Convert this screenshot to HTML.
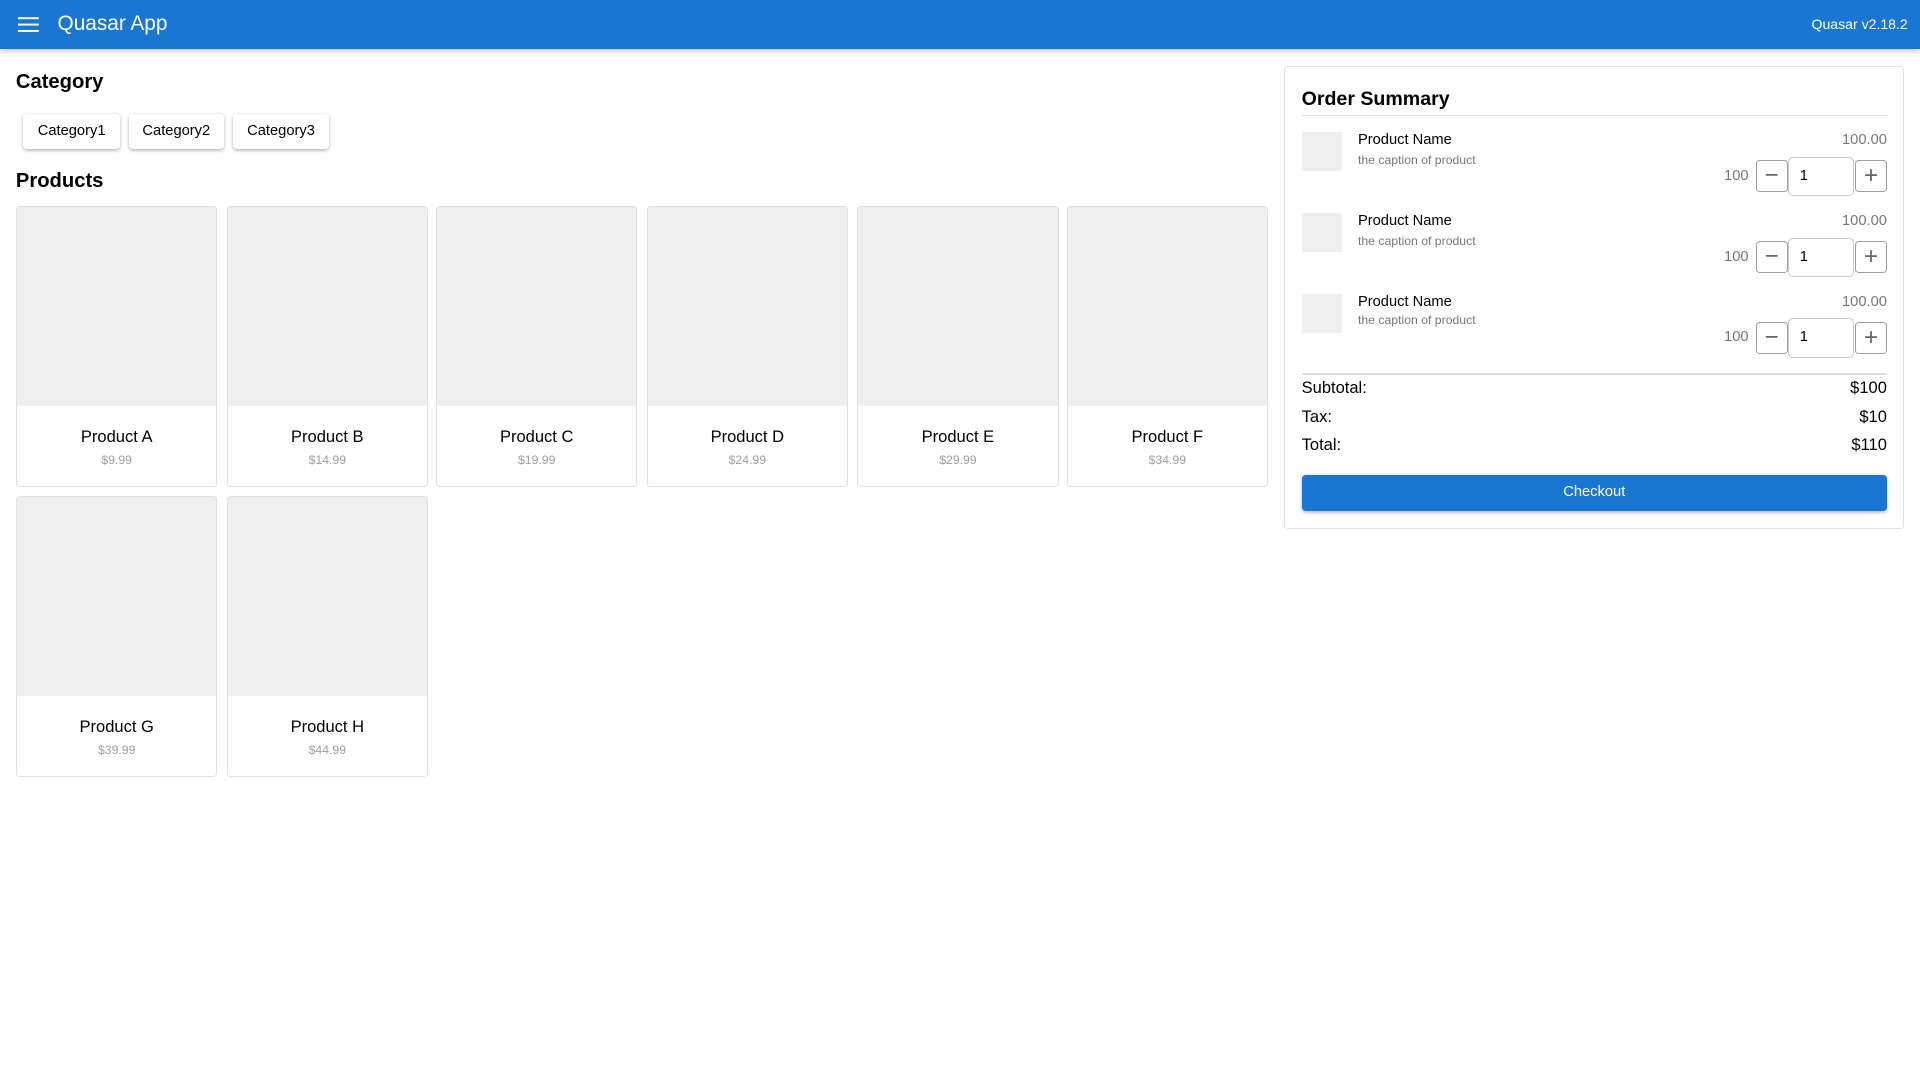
<!DOCTYPE html>
<html><head><meta charset="utf-8"><style>
html,body{margin:0;padding:0;background:#fff;overflow:hidden}
#w{width:1568px;height:882px;zoom:1.2244898;position:relative;font-family:"Liberation Sans",sans-serif;color:#000}
.a{position:absolute;white-space:nowrap}
.hdr{left:0;top:0;width:1568px;height:40px;background:#1976d2;box-shadow:0 1px 6px rgba(0,0,0,.35);z-index:2}
.btn{height:29px;top:93px;background:#fff;border-radius:3px;box-shadow:0 1px 3px rgba(0,0,0,.3);font-size:12px;line-height:29px;text-align:center}
.card{width:163px;height:228px;border:1px solid #e0e0e0;border-radius:3px;overflow:hidden;background:#fff}
.card .img{height:163px;background:#eeeeee}
.card .n{text-align:center;font-size:13.5px;margin-top:17px}
.card .p{text-align:center;font-size:10px;color:#9e9e9e;margin-top:5px}
.qb{width:26px;height:26px;border:1px solid #9e9e9e;border-radius:3px;box-sizing:border-box;color:#666;font-size:20px;line-height:25px;text-align:center}
.inp{width:54px;height:32px;border:1px solid #ccc;border-radius:4px;box-sizing:border-box;font-size:12px;line-height:31px;padding-left:9px;background:#fff}
</style></head><body><div id="w">
<div class="a hdr">
 <svg class="a" style="left:15px;top:13px" width="17" height="14" viewBox="0 0 17 14"><rect y="1" width="17" height="1.6" fill="#fff"/><rect y="6.2" width="17" height="1.6" fill="#fff"/><rect y="11.4" width="17" height="1.6" fill="#fff"/></svg>
 <div class="a" style="left:47px;top:10px;font-size:17px;color:#fff">Quasar App</div>
 <div class="a" style="right:10px;top:13px;font-size:11.5px;color:#fff">Quasar v2.18.2</div>
</div>
<div class="a" style="left:13px;top:58px;font-size:16.5px;font-weight:bold">Category</div>
<div class="a btn" style="left:19px;width:79px">Category1</div>
<div class="a btn" style="left:105px;width:78px">Category2</div>
<div class="a btn" style="left:190px;width:79px">Category3</div>
<div class="a" style="left:13px;top:139px;font-size:16.5px;font-weight:bold">Products</div>

<div class="a card" style="left:13px;top:168px"><div class="img"></div><div class="n">Product A</div><div class="p">$9.99</div></div>
<div class="a card" style="left:185px;top:168px"><div class="img"></div><div class="n">Product B</div><div class="p">$14.99</div></div>
<div class="a card" style="left:356px;top:168px"><div class="img"></div><div class="n">Product C</div><div class="p">$19.99</div></div>
<div class="a card" style="left:528px;top:168px"><div class="img"></div><div class="n">Product D</div><div class="p">$24.99</div></div>
<div class="a card" style="left:700px;top:168px"><div class="img"></div><div class="n">Product E</div><div class="p">$29.99</div></div>
<div class="a card" style="left:871px;top:168px"><div class="img"></div><div class="n">Product F</div><div class="p">$34.99</div></div>
<div class="a card" style="left:13px;top:405px"><div class="img"></div><div class="n">Product G</div><div class="p">$39.99</div></div>
<div class="a card" style="left:185px;top:405px"><div class="img"></div><div class="n">Product H</div><div class="p">$44.99</div></div>

<div class="a" style="left:1049px;top:54px;width:504px;height:376px;border:1px solid #e0e0e0;border-radius:3px"></div>
<div class="a" style="left:1063px;top:72px;font-size:16px;font-weight:bold">Order Summary</div>
<div class="a" style="left:1063px;top:94px;width:478px;height:1px;background:#ddd"></div>

<div class="a" style="left:0;top:108px">
 <div class="a" style="left:1063px;top:0;width:33px;height:32px;background:#eee"></div>
 <div class="a" style="left:1109px;top:0;font-size:12px">Product Name</div>
 <div class="a" style="left:1109px;top:17px;font-size:10px;color:#777">the caption of product</div>
 <div class="a" style="left:1480px;top:0;width:61px;text-align:right;font-size:12px;color:#777">100.00</div>
 <div class="a" style="left:1400px;top:29px;width:28px;text-align:right;font-size:12px;color:#777">100</div>
 <div class="a qb" style="left:1434px;top:23px">−</div>
 <div class="a inp" style="left:1460px;top:20px">1</div>
 <div class="a qb" style="left:1515px;top:23px">+</div>
</div>
<div class="a" style="left:0;top:174px">
 <div class="a" style="left:1063px;top:0;width:33px;height:32px;background:#eee"></div>
 <div class="a" style="left:1109px;top:0;font-size:12px">Product Name</div>
 <div class="a" style="left:1109px;top:17px;font-size:10px;color:#777">the caption of product</div>
 <div class="a" style="left:1480px;top:0;width:61px;text-align:right;font-size:12px;color:#777">100.00</div>
 <div class="a" style="left:1400px;top:29px;width:28px;text-align:right;font-size:12px;color:#777">100</div>
 <div class="a qb" style="left:1434px;top:23px">−</div>
 <div class="a inp" style="left:1460px;top:20px">1</div>
 <div class="a qb" style="left:1515px;top:23px">+</div>
</div>
<div class="a" style="left:0;top:240px">
 <div class="a" style="left:1063px;top:0;width:33px;height:32px;background:#eee"></div>
 <div class="a" style="left:1109px;top:0;font-size:12px">Product Name</div>
 <div class="a" style="left:1109px;top:16px;font-size:10px;color:#777">the caption of product</div>
 <div class="a" style="left:1480px;top:0;width:61px;text-align:right;font-size:12px;color:#777">100.00</div>
 <div class="a" style="left:1400px;top:29px;width:28px;text-align:right;font-size:12px;color:#777">100</div>
 <div class="a qb" style="left:1434px;top:23px">−</div>
 <div class="a inp" style="left:1460px;top:20px">1</div>
 <div class="a qb" style="left:1515px;top:23px">+</div>
</div>

<div class="a" style="left:1063px;top:305px;width:478px;height:1px;background:#ddd"></div>
<div class="a" style="left:1063px;top:309px;font-size:13.5px">Subtotal:</div>
<div class="a" style="left:1441px;top:309px;width:100px;text-align:right;font-size:13.5px">$100</div>
<div class="a" style="left:1063px;top:332px;font-size:13.5px">Tax:</div>
<div class="a" style="left:1441px;top:332px;width:100px;text-align:right;font-size:13.5px">$10</div>
<div class="a" style="left:1063px;top:355px;font-size:13.5px">Total:</div>
<div class="a" style="left:1441px;top:355px;width:100px;text-align:right;font-size:13.5px">$110</div>
<div class="a" style="left:1063px;top:388px;width:478px;height:29px;background:#1976d2;border-radius:3px;box-shadow:0 1px 3px rgba(0,0,0,.3);color:#fff;font-size:12px;line-height:29px;text-align:center">Checkout</div>
</div></body></html>
